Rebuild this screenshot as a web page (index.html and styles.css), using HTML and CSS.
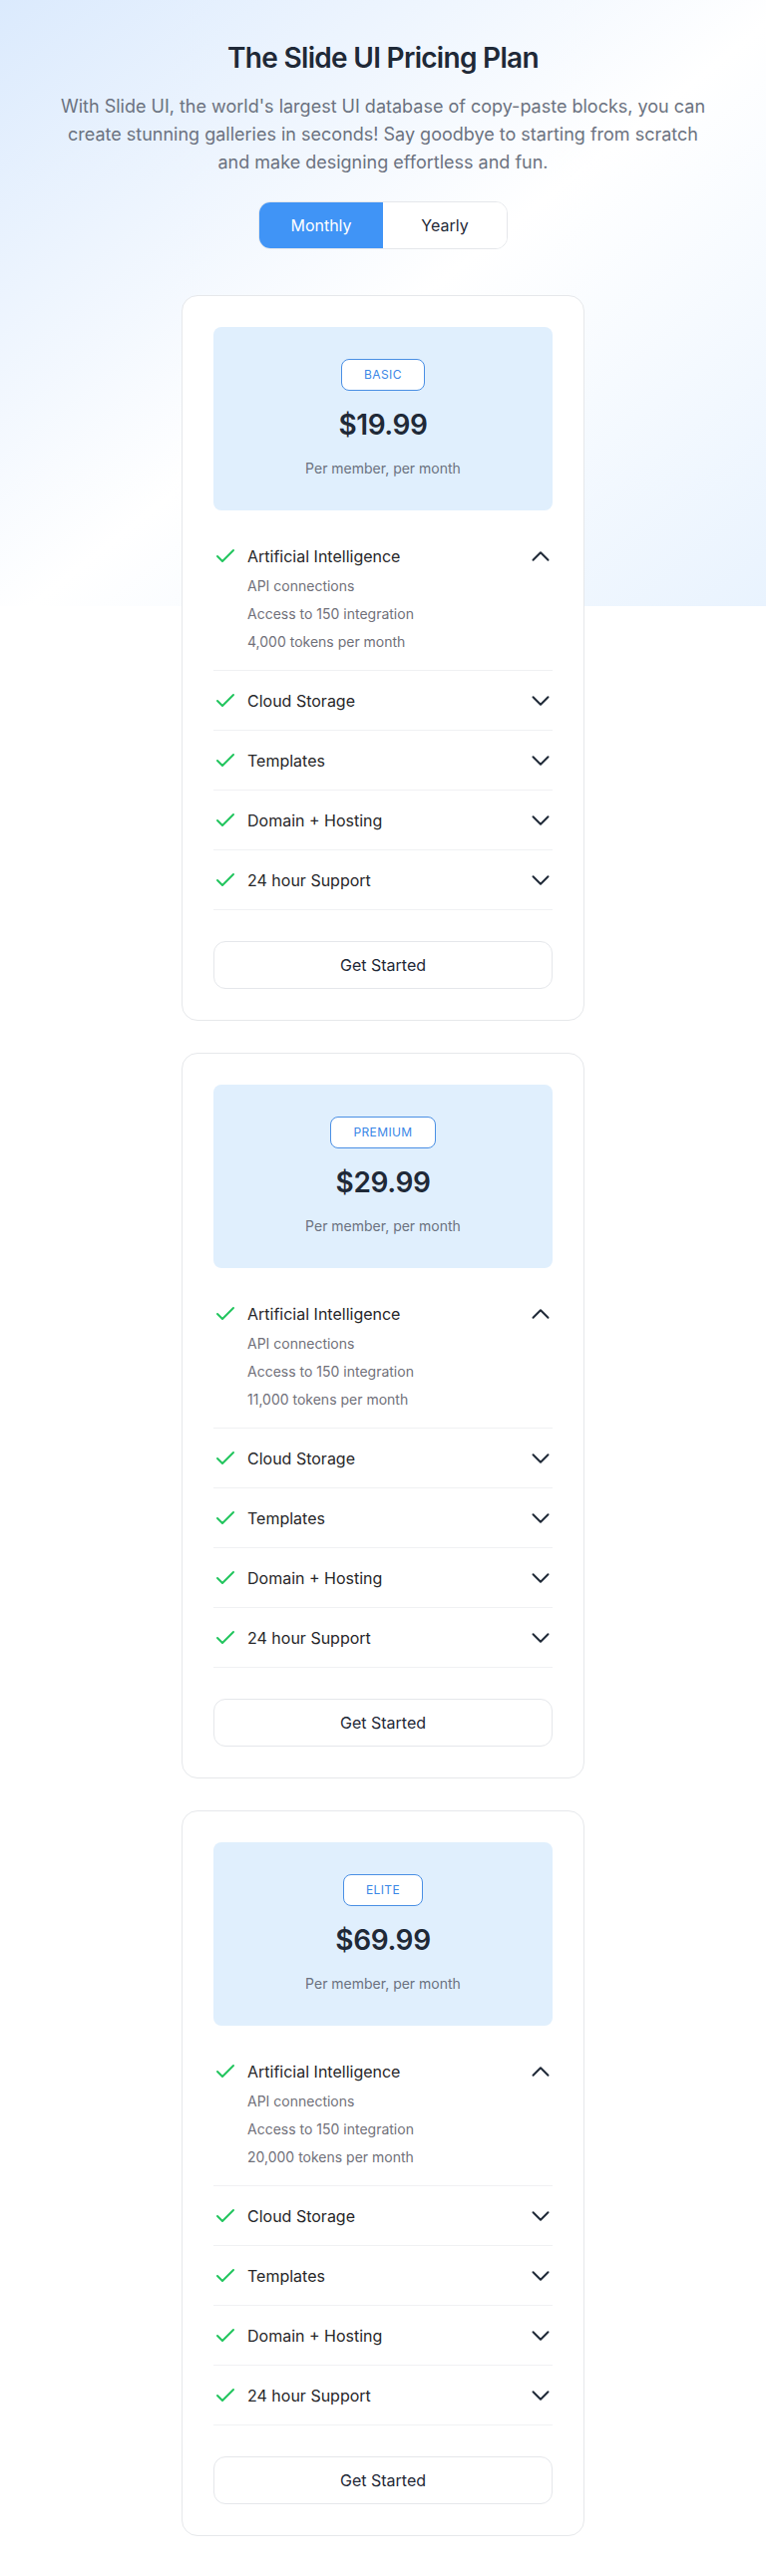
FILE: index.html
```html
<!DOCTYPE html>
<html lang="en">
<head>
<meta charset="utf-8">
<title>The Slide UI Pricing Plan</title>
<link rel="stylesheet" href="styles.css">
</head>
<body>
<main class="page">
  <header class="hero">
    <h1 class="hero-title">The Slide UI Pricing Plan</h1>
    <p class="hero-text">With Slide UI, the world's largest UI database of copy-paste blocks, you can create stunning galleries in seconds! Say goodbye to starting from scratch and make designing effortless and fun.</p>
    <div class="toggle">
      <button class="toggle-btn is-active">Monthly</button>
      <button class="toggle-btn">Yearly</button>
    </div>
  </header>

  <section class="plans">
    <!-- BASIC -->
    <article class="card">
      <div class="price-box">
        <span class="badge">Basic</span>
        <div class="price">$19.99</div>
        <div class="per">Per member, per month</div>
      </div>
      <ul class="features">
        <li class="feature is-open">
          <div class="feature-head">
            <svg class="check" viewBox="0 0 24 24"><path d="M20 6 9 17l-5-5"/></svg>
            <span class="feature-name">Artificial Intelligence</span>
            <svg class="chev" viewBox="0 0 24 24"><path d="m4.5 15.75 7.5-7.5 7.5 7.5"/></svg>
          </div>
          <ul class="sub">
            <li>API connections</li>
            <li>Access to 150 integration</li>
            <li>4,000 tokens per month</li>
          </ul>
        </li>
        <li class="feature"><div class="feature-head"><svg class="check" viewBox="0 0 24 24"><path d="M20 6 9 17l-5-5"/></svg><span class="feature-name">Cloud Storage</span><svg class="chev" viewBox="0 0 24 24"><path d="m19.5 8.25-7.5 7.5-7.5-7.5"/></svg></div></li>
        <li class="feature"><div class="feature-head"><svg class="check" viewBox="0 0 24 24"><path d="M20 6 9 17l-5-5"/></svg><span class="feature-name">Templates</span><svg class="chev" viewBox="0 0 24 24"><path d="m19.5 8.25-7.5 7.5-7.5-7.5"/></svg></div></li>
        <li class="feature"><div class="feature-head"><svg class="check" viewBox="0 0 24 24"><path d="M20 6 9 17l-5-5"/></svg><span class="feature-name">Domain + Hosting</span><svg class="chev" viewBox="0 0 24 24"><path d="m19.5 8.25-7.5 7.5-7.5-7.5"/></svg></div></li>
        <li class="feature"><div class="feature-head"><svg class="check" viewBox="0 0 24 24"><path d="M20 6 9 17l-5-5"/></svg><span class="feature-name">24 hour Support</span><svg class="chev" viewBox="0 0 24 24"><path d="m19.5 8.25-7.5 7.5-7.5-7.5"/></svg></div></li>
      </ul>
      <button class="cta">Get Started</button>
    </article>

    <!-- PREMIUM -->
    <article class="card">
      <div class="price-box">
        <span class="badge">Premium</span>
        <div class="price">$29.99</div>
        <div class="per">Per member, per month</div>
      </div>
      <ul class="features">
        <li class="feature is-open">
          <div class="feature-head">
            <svg class="check" viewBox="0 0 24 24"><path d="M20 6 9 17l-5-5"/></svg>
            <span class="feature-name">Artificial Intelligence</span>
            <svg class="chev" viewBox="0 0 24 24"><path d="m4.5 15.75 7.5-7.5 7.5 7.5"/></svg>
          </div>
          <ul class="sub">
            <li>API connections</li>
            <li>Access to 150 integration</li>
            <li>11,000 tokens per month</li>
          </ul>
        </li>
        <li class="feature"><div class="feature-head"><svg class="check" viewBox="0 0 24 24"><path d="M20 6 9 17l-5-5"/></svg><span class="feature-name">Cloud Storage</span><svg class="chev" viewBox="0 0 24 24"><path d="m19.5 8.25-7.5 7.5-7.5-7.5"/></svg></div></li>
        <li class="feature"><div class="feature-head"><svg class="check" viewBox="0 0 24 24"><path d="M20 6 9 17l-5-5"/></svg><span class="feature-name">Templates</span><svg class="chev" viewBox="0 0 24 24"><path d="m19.5 8.25-7.5 7.5-7.5-7.5"/></svg></div></li>
        <li class="feature"><div class="feature-head"><svg class="check" viewBox="0 0 24 24"><path d="M20 6 9 17l-5-5"/></svg><span class="feature-name">Domain + Hosting</span><svg class="chev" viewBox="0 0 24 24"><path d="m19.5 8.25-7.5 7.5-7.5-7.5"/></svg></div></li>
        <li class="feature"><div class="feature-head"><svg class="check" viewBox="0 0 24 24"><path d="M20 6 9 17l-5-5"/></svg><span class="feature-name">24 hour Support</span><svg class="chev" viewBox="0 0 24 24"><path d="m19.5 8.25-7.5 7.5-7.5-7.5"/></svg></div></li>
      </ul>
      <button class="cta">Get Started</button>
    </article>

    <!-- ELITE -->
    <article class="card">
      <div class="price-box">
        <span class="badge">Elite</span>
        <div class="price">$69.99</div>
        <div class="per">Per member, per month</div>
      </div>
      <ul class="features">
        <li class="feature is-open">
          <div class="feature-head">
            <svg class="check" viewBox="0 0 24 24"><path d="M20 6 9 17l-5-5"/></svg>
            <span class="feature-name">Artificial Intelligence</span>
            <svg class="chev" viewBox="0 0 24 24"><path d="m4.5 15.75 7.5-7.5 7.5 7.5"/></svg>
          </div>
          <ul class="sub">
            <li>API connections</li>
            <li>Access to 150 integration</li>
            <li>20,000 tokens per month</li>
          </ul>
        </li>
        <li class="feature"><div class="feature-head"><svg class="check" viewBox="0 0 24 24"><path d="M20 6 9 17l-5-5"/></svg><span class="feature-name">Cloud Storage</span><svg class="chev" viewBox="0 0 24 24"><path d="m19.5 8.25-7.5 7.5-7.5-7.5"/></svg></div></li>
        <li class="feature"><div class="feature-head"><svg class="check" viewBox="0 0 24 24"><path d="M20 6 9 17l-5-5"/></svg><span class="feature-name">Templates</span><svg class="chev" viewBox="0 0 24 24"><path d="m19.5 8.25-7.5 7.5-7.5-7.5"/></svg></div></li>
        <li class="feature"><div class="feature-head"><svg class="check" viewBox="0 0 24 24"><path d="M20 6 9 17l-5-5"/></svg><span class="feature-name">Domain + Hosting</span><svg class="chev" viewBox="0 0 24 24"><path d="m19.5 8.25-7.5 7.5-7.5-7.5"/></svg></div></li>
        <li class="feature"><div class="feature-head"><svg class="check" viewBox="0 0 24 24"><path d="M20 6 9 17l-5-5"/></svg><span class="feature-name">24 hour Support</span><svg class="chev" viewBox="0 0 24 24"><path d="m19.5 8.25-7.5 7.5-7.5-7.5"/></svg></div></li>
      </ul>
      <button class="cta">Get Started</button>
    </article>
  </section>
</main>
</body>
</html>
```

FILE: styles.css
```css
* { box-sizing: border-box; }

html, body { margin: 0; padding: 0; }

body {
  font-family: Inter, "Noto Sans", "Liberation Sans", sans-serif;
  color: #1f2937;
  background-color: #ffffff;
  background-image: linear-gradient(to bottom right, #dbeafd 0%, #ffffff 52%, #e9f3fe 100%);
  background-size: 100% 608px;
  background-repeat: no-repeat;
  -webkit-font-smoothing: antialiased;
}

.page {
  padding: 40px 0 40px;
}

.hero {
  display: flex;
  flex-direction: column;
  align-items: center;
  text-align: center;
}

.hero-title {
  margin: 0;
  font-size: 28px;
  line-height: 36px;
  font-weight: 600;
  color: #1f2937;
  letter-spacing: -0.7px;
}

.hero-text {
  margin: 17px 0 0;
  max-width: 648px;
  font-size: 18px;
  line-height: 28px;
  color: #6b7280;
}

.toggle {
  margin-top: 25px;
  display: flex;
  border: 1px solid #e5e7eb;
  border-radius: 12px;
  overflow: hidden;
  background: #ffffff;
}

.toggle-btn {
  width: 124px;
  height: 46px;
  border: 0;
  background: #ffffff;
  font-family: inherit;
  font-size: 16px;
  color: #1f2937;
  cursor: pointer;
}

.toggle-btn.is-active {
  background: #4094f6;
  color: #ffffff;
}

.plans {
  margin-top: 46px;
  display: flex;
  flex-direction: column;
  align-items: center;
  gap: 32px;
}

.card {
  width: 404px;
  padding: 31px;
  background: #ffffff;
  border: 1px solid #e6e8eb;
  border-radius: 16px;
  display: flex;
  flex-direction: column;
}

.price-box {
  background: #e0effd;
  border-radius: 8px;
  padding: 32px 16px;
  display: flex;
  flex-direction: column;
  align-items: center;
}

.badge {
  display: inline-block;
  padding: 7px 22px;
  font-size: 12px;
  line-height: 16px;
  text-transform: uppercase;
  letter-spacing: 0.4px;
  color: #3b87e6;
  background: #ffffff;
  border: 1px solid #4a8fe4;
  border-radius: 8px;
}

.price {
  margin-top: 16px;
  font-size: 28px;
  line-height: 36px;
  font-weight: 600;
  letter-spacing: -0.4px;
  color: #1f2937;
}

.per {
  margin-top: 16px;
  font-size: 14px;
  line-height: 20px;
  color: #6b7280;
}

.features {
  list-style: none;
  margin: 16px 0 0;
  padding: 0;
}

.feature {
  border-bottom: 1px solid #f0f1f3;
}

.feature-head {
  display: flex;
  align-items: center;
  padding: 18px 0 17px;
  font-size: 16px;
  line-height: 24px;
  color: #27272a;
}

.feature.is-open .feature-head {
  padding-bottom: 4px;
}

.check {
  width: 24px;
  height: 24px;
  flex: none;
  fill: none;
  stroke: #22c55e;
  stroke-width: 2;
  stroke-linecap: round;
  stroke-linejoin: round;
}

.feature-name {
  flex: 1;
  margin-left: 10px;
}

.chev {
  width: 24px;
  height: 24px;
  flex: none;
  fill: none;
  stroke: #1f2937;
  stroke-width: 2;
  stroke-linecap: round;
  stroke-linejoin: round;
}

.sub {
  list-style: none;
  margin: 0;
  padding: 0 0 14px 34px;
  font-size: 14px;
  line-height: 28px;
  color: #71717a;
}

.cta {
  margin-top: 31px;
  height: 48px;
  width: 100%;
  background: #ffffff;
  border: 1px solid #e5e7eb;
  border-radius: 12px;
  font-family: inherit;
  font-size: 16px;
  font-weight: 400;
  color: #1f2937;
  cursor: pointer;
}
```
